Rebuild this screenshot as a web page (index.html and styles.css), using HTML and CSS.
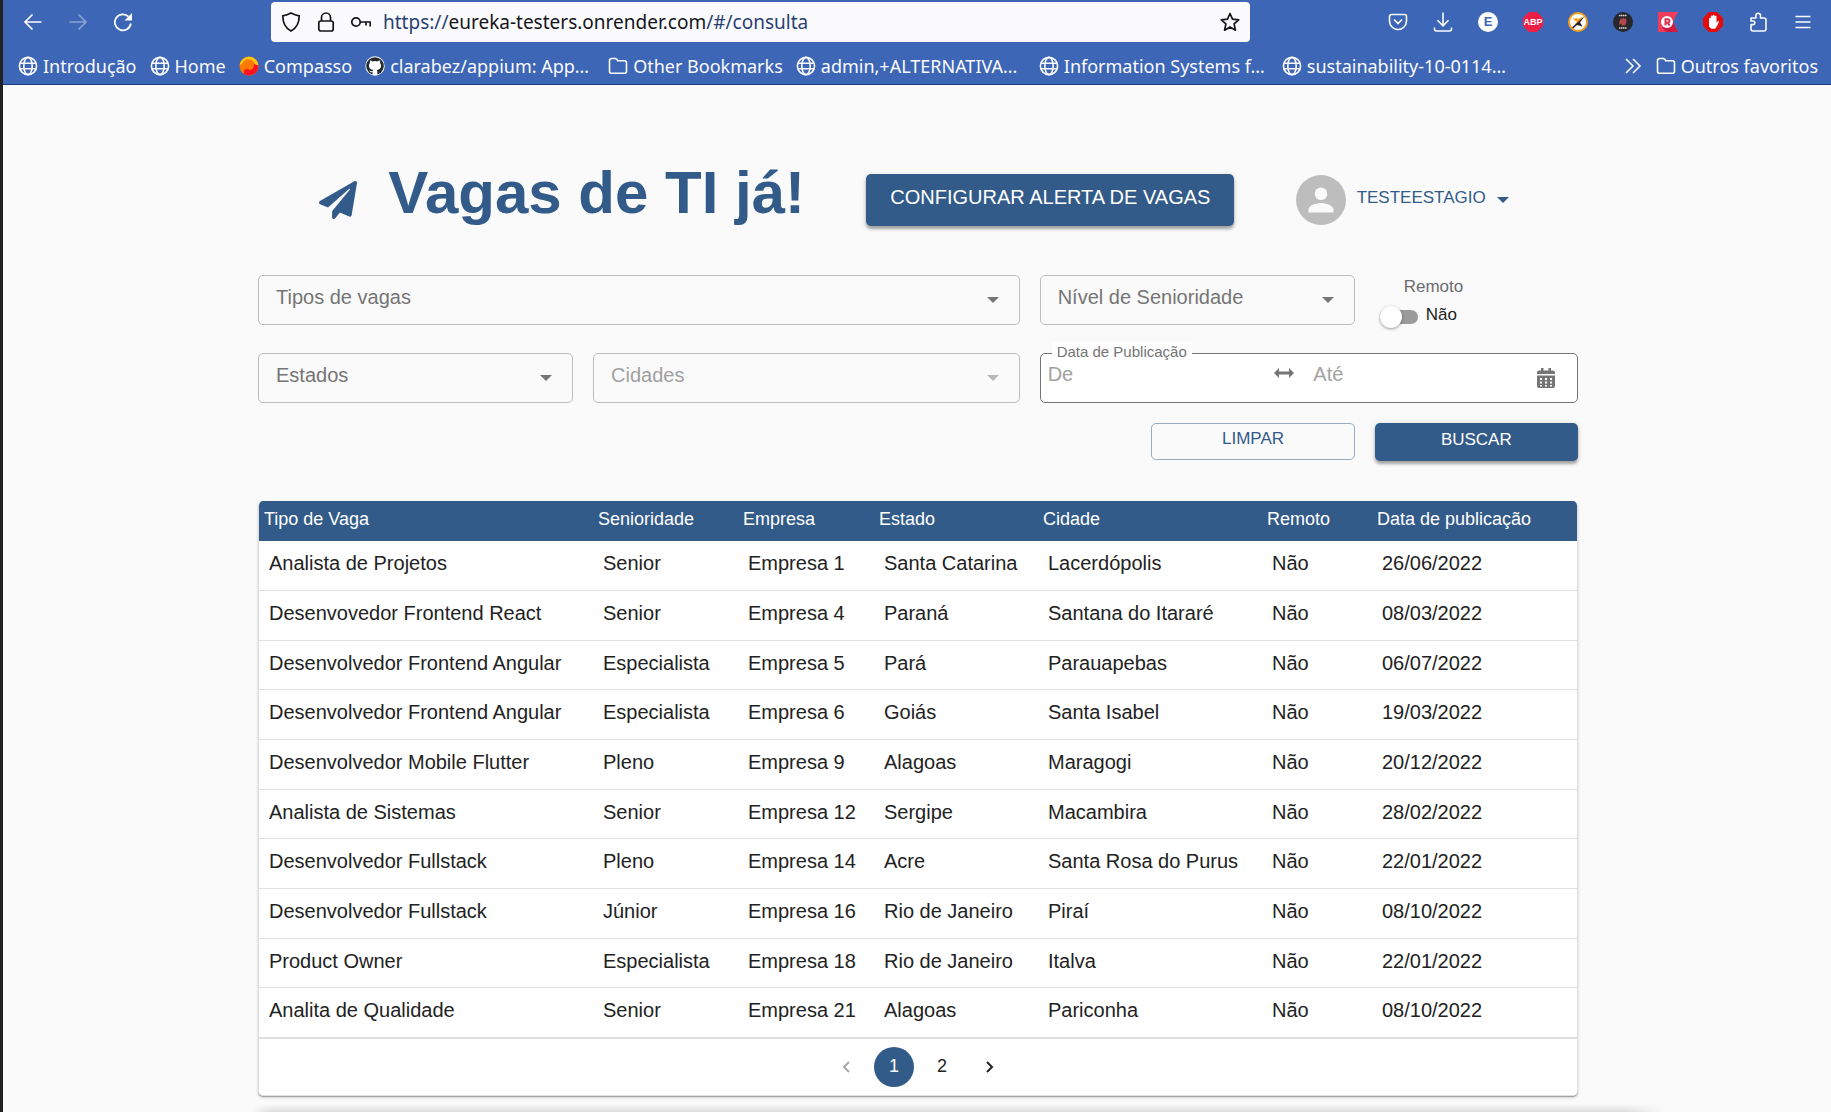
FILE: index.html
```html
<!DOCTYPE html>
<html lang="pt-BR">
<head>
<meta charset="utf-8">
<title>Vagas de TI já!</title>
<link rel="stylesheet" href="styles.css">
</head>
<body>
<svg class="defs" aria-hidden="true">
  <symbol id="globe" viewBox="0 0 20 20"><g fill="none" stroke="currentColor" stroke-width="1.6"><circle cx="10" cy="10" r="8.6"/><ellipse cx="10" cy="10" rx="4.2" ry="8.6"/><path d="M2 7.2h16M2 12.8h16"/></g></symbol>
  <symbol id="folder" viewBox="0 0 20 20"><path d="M1.5 4.5a2 2 0 0 1 2-2h3.6c.7 0 1.2.3 1.6.8l1 1.4h6.8a2 2 0 0 1 2 2v8.6a2 2 0 0 1-2 2h-13a2 2 0 0 1-2-2z" fill="none" stroke="currentColor" stroke-width="1.6"/></symbol>
  <symbol id="caret" viewBox="0 0 12 6"><path d="M0 0h12L6 6z" fill="currentColor"/></symbol>
</svg>

<header class="browser">
  <div class="toolbar">
    <div class="nav">
      <button type="button" aria-label="Voltar"><svg class="icon" viewBox="0 0 20 20"><path d="M18.500 10H2M9.500 2.500 2 10l7.500 7.500" fill="none" stroke="currentColor" stroke-width="1.700"/></svg></button>
      <button type="button" aria-label="Avançar" class="dim"><svg class="icon" viewBox="0 0 20 20"><path d="M1.500 10H18M10.500 2.500 18 10l-7.500 7.500" fill="none" stroke="currentColor" stroke-width="1.700"/></svg></button>
      <button type="button" aria-label="Recarregar"><svg class="icon" viewBox="0 0 20 20"><path d="M17.800 11.500A8 8 0 1 1 15.500 4.600" fill="none" stroke="currentColor" stroke-width="1.800"/><path d="M19 1v7.500h-7.500z" fill="currentColor"/></svg></button>
    </div>
    <div class="address">
      <svg class="icon" viewBox="0 0 20 20"><path d="M10 1c2.600 1.500 5.200 2.400 8.200 2.900 0 7-1.900 11.600-8.200 15.100C3.700 15.500 1.800 10.900 1.800 3.900 4.800 3.400 7.400 2.500 10 1z" fill="none" stroke="currentColor" stroke-width="1.700"/></svg>
      <svg class="icon" viewBox="0 0 20 20"><path d="M5.500 9V5.500a4.500 4.500 0 0 1 9 0V9" fill="none" stroke="currentColor" stroke-width="1.700"/><rect x="2.800" y="9" width="14.400" height="10" rx="2" fill="none" stroke="currentColor" stroke-width="1.700"/></svg>
      <svg class="icon" viewBox="0 0 20 20"><circle cx="5" cy="10" r="4.200" fill="none" stroke="currentColor" stroke-width="1.700"/><path d="M9 10h10.200v4.500M15 10v3.500" fill="none" stroke="currentColor" stroke-width="1.700"/></svg>
      <span class="url">https://<b>eureka-testers.onrender.com</b>/#/consulta</span>
      <button type="button" aria-label="Adicionar aos favoritos"><svg class="icon" viewBox="0 0 20 20"><path d="m10 1.500 2.500 5.600 6.200.7-4.600 4.100 1.300 6.300-5.400-3.200-5.400 3.200 1.300-6.300L1.300 7.800l6.200-.7z" fill="none" stroke="currentColor" stroke-width="1.700" stroke-linejoin="round"/></svg></button>
    </div>
    <div class="extensions">
      <button type="button" aria-label="Pocket"><svg class="icon" viewBox="0 0 20 20"><path d="M3.500 2.500h13a2 2 0 0 1 2 2V9a8.500 8.500 0 0 1-17 0V4.500a2 2 0 0 1 2-2zM6 7.500l4 4 4-4" fill="none" stroke="currentColor" stroke-width="1.600"/></svg></button>
      <button type="button" aria-label="Downloads"><svg class="icon" viewBox="0 0 20 20"><path d="M10 .5v13M4.500 8.300l5.500 5.500 5.500-5.500M1.500 15.500V17a2 2 0 0 0 2 2h13a2 2 0 0 0 2-2v-1.500" fill="none" stroke="currentColor" stroke-width="1.600"/></svg></button>
      <button type="button" class="badge badge-e">E</button>
      <button type="button" class="badge badge-abp">ABP</button>
      <button type="button" aria-label="Bloqueador"><svg class="icon" viewBox="0 0 20 20"><circle cx="10" cy="10" r="9" fill="#fff" stroke="#f5a01a" stroke-width="2"/><path d="M4.500 6.500h7.500l1.500-1.500 1.500 1-7 7.500-1-1.500 2-2z" fill="#f5a01a"/><path d="M16.800 3.800 4 15.500l1.200 1L9 13l5.500 1.500-2.500-4z" fill="#222"/></svg></button>
      <button type="button" aria-label="Twitch Adblock"><svg class="icon" viewBox="0 0 20 20"><circle cx="10" cy="10" r="10" fill="#26262b"/><path d="M6.500 9 8 6l1 1.500 1-2 1.500 1.500 1.500-1 .5 3-.5 3-1.500 1.500H9L8 11.500 6 13z" fill="#b2474c"/><path d="M6 3.500h8M6 16h8" stroke="#ddd" stroke-width="1.500" stroke-dasharray="1.500 .5"/></svg></button>
      <button type="button" aria-label="Recomendações"><svg class="icon" viewBox="0 0 20 20"><path d="M0 0h20l-5 10 5 10H0z" fill="#ee3c5a"/><path d="m4 15 10-10 1 5 5 10H8z" fill="#cf1b3e"/><circle cx="9" cy="10" r="6" fill="#fff"/><path d="M7.500 13.500V7.300h2.200a1.700 1.700 0 0 1 0 3.400H7.500m2.300 0 1.700 2.800" fill="none" stroke="#d9304f" stroke-width="2"/></svg></button>
      <button type="button" aria-label="AdBlock"><svg class="icon" viewBox="0 0 20 20"><path d="M6 0h8l6 6v8l-6 6H6l-6-6V6z" fill="#e50b0b"/><path d="M6 6.500a1 1 0 0 1 1.800 0V4.300a1 1 0 0 1 1.900 0V3.500a1 1 0 0 1 1.900 0v1a1 1 0 0 1 1.900 0V11l1.200-1.700c.8-.6 1.600 0 1.200.8L13.500 15l-1.500 1.800H8.200L6 14.500z" fill="#fff"/></svg></button>
      <button type="button" aria-label="Extensões"><svg class="icon" viewBox="0 0 20 20"><path d="M3 12.500V17a2 2 0 0 0 2 2h11a2 2 0 0 0 2-2V8a2 2 0 0 0-2-2h-3.500V3.500a2.300 2.300 0 0 0-4.600 0V6H3v3h2a1.800 1.800 0 0 1 0 3.600z" fill="none" stroke="currentColor" stroke-width="1.600" stroke-linejoin="round"/></svg></button>
      <button type="button" aria-label="Menu"><svg class="icon" viewBox="0 0 20 20"><path d="M2.500 4.500h15M2.500 10h15M2.500 15.500h15" stroke="currentColor" stroke-width="1.600"/></svg></button>
    </div>
  </div>
  <nav class="bookmarks">
    <a href="#"><svg class="icon"><use href="#globe"/></svg>Introdução</a>
    <a href="#"><svg class="icon"><use href="#globe"/></svg>Home</a>
    <a href="#"><svg class="icon" viewBox="0 0 20 20"><circle cx="10" cy="10" r="9.500" fill="#ff7a00"/><path d="M.6 9A9.500 9.500 0 0 1 19.400 9L16 12A6.500 6.500 0 0 0 3 8z" fill="#ffc814"/><circle cx="9" cy="10" r="6" fill="#ff7a00"/><path d="M19.400 9.500A9.500 9.500 0 0 1 5 18c-1-5 3-6 6-4 3 0 4-3 4-6z" fill="#ff1020"/></svg>Compasso</a>
    <a href="#" class="long"><svg class="icon" viewBox="0 0 20 20"><circle cx="10" cy="10" r="9.700" fill="#fff"/><circle cx="10" cy="10" r="8.800" fill="#24292e"/><path d="M7.600 19v-2.800c-2 .4-2.800-.6-3.400-1.800 1.200-.1 1.600 1.300 3.400.8.100-.6.300-1 .6-1.200-3-.4-4.300-1.700-4.300-4.400 0-1.100.4-2 1-2.700-.2-.8-.1-1.800.2-2.500 1 0 1.800.5 2.500 1a9 9 0 0 1 4.800 0c.7-.5 1.500-1 2.500-1 .3.700.4 1.700.2 2.500.6.700 1 1.600 1 2.700 0 2.700-1.300 4-4.300 4.400.4.400.6 1 .6 1.800V19z" fill="#fff"/></svg>clarabez/appium: App…</a>
    <a href="#"><svg class="icon"><use href="#folder"/></svg>Other Bookmarks</a>
    <a href="#" class="long"><svg class="icon"><use href="#globe"/></svg>admin,+ALTERNATIVA…</a>
    <a href="#" class="long"><svg class="icon"><use href="#globe"/></svg>Information Systems f…</a>
    <a href="#" class="long"><svg class="icon"><use href="#globe"/></svg>sustainability-10-0114…</a>
    <button type="button" class="more" aria-label="Mais favoritos"><svg class="icon" viewBox="0 0 20 20"><path d="m3 3 7 7-7 7M10 3l7 7-7 7" fill="none" stroke="currentColor" stroke-width="1.600"/></svg></button>
    <a href="#"><svg class="icon"><use href="#folder"/></svg>Outros favoritos</a>
  </nav>
</header>

<main class="page">
  <div class="container">
    <div class="masthead">
      <div class="brand">
        <svg class="plane" viewBox="0 0 512 512"><path d="M476 3.200 12.500 270.600c-18.100 10.400-15.800 35.600 2.200 43.200L121 358.400l287.300-253.200c5.500-4.900 13.300 2.600 8.600 8.300L176 407v80.500c0 23.600 28.500 32.900 42.500 15.800L282 426l124.600 52.200c14.200 6 30.400-2.900 33-18.200l72-432C515 7.800 493.300-6.800 476 3.200z" fill="currentColor"/></svg>
        <h1>Vagas de TI já!</h1>
      </div>
      <button type="button" class="btn btn-solid btn-large">CONFIGURAR ALERTA DE VAGAS</button>
      <button type="button" class="user">
        <svg class="avatar" viewBox="0 0 50 50"><circle cx="25" cy="25" r="25" fill="#bdbdbd"/><circle cx="25" cy="18.700" r="6.300" fill="#fafafa"/><path d="M12.500 37.500v-3.200c0-4.200 8.300-6.400 12.500-6.400s12.500 2.200 12.500 6.400v3.200z" fill="#fafafa"/></svg>
        <span>TESTEESTAGIO</span>
        <svg class="caret"><use href="#caret"/></svg>
      </button>
    </div>

    <form class="filters">
      <div class="filter-row">
        <div class="field w7"><select aria-label="Tipos de vagas"><option>Tipos de vagas</option></select><svg class="caret"><use href="#caret"/></svg></div>
        <div class="field w3"><select aria-label="Nível de Senioridade"><option>Nível de Senioridade</option></select><svg class="caret"><use href="#caret"/></svg></div>
        <div class="remote">
          <label for="remoto">Remoto</label>
          <div class="switch"><input type="checkbox" id="remoto"><span>Não</span></div>
        </div>
      </div>
      <div class="filter-row">
        <div class="field w3"><select aria-label="Estados"><option>Estados</option></select><svg class="caret"><use href="#caret"/></svg></div>
        <div class="field w4"><select aria-label="Cidades" disabled><option>Cidades</option></select><svg class="caret"><use href="#caret"/></svg></div>
        <div class="dates">
          <label for="de">Data de Publicação</label>
          <input type="text" id="de" placeholder="De">
          <svg class="range" viewBox="0 0 20 10"><path d="M0 5 5 0v3.600h10V0l5 5-5 5V6.400H5V10z" fill="currentColor"/></svg>
          <input type="text" aria-label="Até" placeholder="Até">
          <svg class="calendar" viewBox="0 0 18 20"><path fill="currentColor" fill-rule="evenodd" d="M0 7.500h18V18a2 2 0 0 1-2 2H2a2 2 0 0 1-2-2zM3 10v2h2v-2zm5 0v2h2v-2zm5 0v2h2v-2zM3 13.500v2h2v-2zm5 0v2h2v-2zm5 0v2h2v-2zM3 17v1.500h2V17zm5 0v1.500h2V17zm5 0v1.500h2V17zM18 6V4.500a2 2 0 0 0-2-2h-2V0h-2.500v2.500h-5V0H4v2.500H2a2 2 0 0 0-2 2V6z"/></svg>
        </div>
      </div>
      <div class="filter-row">
        <button type="reset" class="btn btn-outline">LIMPAR</button>
        <button type="button" class="btn btn-solid">BUSCAR</button>
      </div>
    </form>

    <section class="results">
      <table>
        <colgroup><col class="c-type"><col class="c-level"><col class="c-company"><col class="c-state"><col class="c-city"><col class="c-remote"><col></colgroup>
        <thead><tr><th>Tipo de Vaga</th><th>Senioridade</th><th>Empresa</th><th>Estado</th><th>Cidade</th><th>Remoto</th><th>Data de publicação</th></tr></thead>
        <tbody>
          <tr><td>Analista de Projetos</td><td>Senior</td><td>Empresa 1</td><td>Santa Catarina</td><td>Lacerdópolis</td><td>Não</td><td>26/06/2022</td></tr>
          <tr><td>Desenvovedor Frontend React</td><td>Senior</td><td>Empresa 4</td><td>Paraná</td><td>Santana do Itararé</td><td>Não</td><td>08/03/2022</td></tr>
          <tr><td>Desenvolvedor Frontend Angular</td><td>Especialista</td><td>Empresa 5</td><td>Pará</td><td>Parauapebas</td><td>Não</td><td>06/07/2022</td></tr>
          <tr><td>Desenvolvedor Frontend Angular</td><td>Especialista</td><td>Empresa 6</td><td>Goiás</td><td>Santa Isabel</td><td>Não</td><td>19/03/2022</td></tr>
          <tr><td>Desenvolvedor Mobile Flutter</td><td>Pleno</td><td>Empresa 9</td><td>Alagoas</td><td>Maragogi</td><td>Não</td><td>20/12/2022</td></tr>
          <tr><td>Analista de Sistemas</td><td>Senior</td><td>Empresa 12</td><td>Sergipe</td><td>Macambira</td><td>Não</td><td>28/02/2022</td></tr>
          <tr><td>Desenvolvedor Fullstack</td><td>Pleno</td><td>Empresa 14</td><td>Acre</td><td>Santa Rosa do Purus</td><td>Não</td><td>22/01/2022</td></tr>
          <tr><td>Desenvolvedor Fullstack</td><td>Júnior</td><td>Empresa 16</td><td>Rio de Janeiro</td><td>Piraí</td><td>Não</td><td>08/10/2022</td></tr>
          <tr><td>Product Owner</td><td>Especialista</td><td>Empresa 18</td><td>Rio de Janeiro</td><td>Italva</td><td>Não</td><td>22/01/2022</td></tr>
          <tr><td>Analita de Qualidade</td><td>Senior</td><td>Empresa 21</td><td>Alagoas</td><td>Pariconha</td><td>Não</td><td>08/10/2022</td></tr>
        </tbody>
      </table>
      <nav class="pagination" aria-label="Paginação">
        <button type="button" aria-label="Anterior" disabled><svg class="chevron" viewBox="0 0 8 12"><path d="M7 1 2 6l5 5" fill="none" stroke="currentColor" stroke-width="2"/></svg></button>
        <button type="button" class="current">1</button>
        <button type="button">2</button>
        <button type="button" aria-label="Próxima"><svg class="chevron" viewBox="0 0 8 12"><path d="m1 1 5 5-5 5" fill="none" stroke="currentColor" stroke-width="2"/></svg></button>
      </nav>
    </section>
  </div>
</main>
<footer class="shade"></footer>
</body>
</html>
```
FILE: styles.css
```css
* {
  box-sizing: border-box;
}

body {
  margin: 0;
  min-height: 100vh;
  display: flex;
  flex-direction: column;
  border-left: 3px solid #222;
  background: #fafafa;
  color: #222;
  font: 20px/24px "Liberation Sans", Arial, sans-serif;
}

button,
input,
select {
  font: inherit;
  color: inherit;
}

button {
  padding: 0;
  border: 0;
  background: none;
}

.defs {
  display: none;
}

.icon {
  display: block;
  flex: none;
  width: 20px;
  height: 20px;
}

/* Browser bars */
.browser {
  flex: none;
  background: #3d66b7;
  border-bottom: 1px solid #1d3a7c;
  color: #fbfbfe;
  font-family: "Noto Sans", "Open Sans", sans-serif;
  font-size: 18px;
}

.toolbar {
  display: flex;
  align-items: center;
  padding: 2px 18px 0 20px;
}

.nav {
  display: flex;
  gap: 25px;
  width: 248px;
}

.dim {
  opacity: 0.4;
}

.address {
  flex: 1;
  display: flex;
  align-items: center;
  gap: 15px;
  height: 40px;
  padding: 0 10px;
  border-radius: 4px;
  background: #fbfbfe;
  color: #15141a;
}

.url {
  flex: 1;
  margin-left: -3px;
  color: #2a3f73;
  font-size: 19px;
}

.url b {
  font-weight: 400;
  color: #15141a;
}

.extensions {
  display: flex;
  gap: 25px;
  padding-left: 138px;
}

.badge {
  width: 20px;
  height: 20px;
  font: bold 13px/20px "Liberation Sans", Arial, sans-serif;
}

.badge-e {
  border-radius: 50%;
  background: #fff;
  color: #3d66b7;
}

.badge-abp {
  background: #ed1e45;
  clip-path: polygon(30% 0, 70% 0, 100% 30%, 100% 70%, 70% 100%, 30% 100%, 0 70%, 0 30%);
  font-size: 9px;
}

.bookmarks {
  display: flex;
  align-items: center;
  gap: 13px;
  height: 42px;
  padding: 6px 13px 0 15px;
  white-space: nowrap;
}

.bookmarks a {
  display: flex;
  align-items: center;
  gap: 5px;
  color: inherit;
  text-decoration: none;
}

.bookmarks .long {
  width: 230px;
}

.more {
  margin-left: auto;
}

/* Page */
.page {
  flex: 1;
  padding: 80px 20px 0 22px;
}

.container {
  max-width: 1320px;
  margin: 0 auto;
}

.masthead {
  display: flex;
  justify-content: space-evenly;
  align-items: center;
  height: 70px;
  color: #325b89;
}

.brand {
  display: flex;
  align-items: center;
  gap: 31px;
}

.plane {
  width: 38px;
  height: 38px;
}

h1 {
  margin: 0;
  padding-bottom: 14px;
  font-size: 60px;
  line-height: 64px;
}

.btn {
  height: 38px;
  padding-bottom: 5px;
  border-radius: 5px;
  font-size: 17px;
}

.btn-solid {
  background: #325b89;
  color: #fff;
  box-shadow: 0 3px 3px rgba(0, 0, 0, 0.3), 0 1px 6px rgba(0, 0, 0, 0.12);
}

.btn-outline {
  height: 37px;
  border: 1px solid #98adc4;
  color: #325b89;
}

.btn-large {
  height: 52px;
  padding: 0 24px 6px;
  font-size: 20px;
}

.user {
  display: flex;
  align-items: center;
  gap: 11px;
  padding-right: 8px;
  font-size: 17px;
}

.user span {
  padding-bottom: 4px;
}

.avatar {
  width: 50px;
  height: 50px;
}

.caret {
  flex: none;
  width: 12px;
  height: 6px;
}

.filters {
  display: grid;
  gap: 20px;
  padding-top: 40px;
}

.filter-row {
  display: grid;
  grid-template-columns: repeat(12, 1fr);
  gap: 20px;
}

.field {
  position: relative;
  height: 50px;
  color: #757575;
}

.field select {
  appearance: none;
  width: 100%;
  height: 100%;
  padding: 0 40px 6px 17px;
  border: 1px solid #bcbcbc;
  border-radius: 5px;
  background: none;
  opacity: 1;
}

.field select:disabled {
  color: #a0a0a0;
}

.field select:disabled + .caret {
  color: #b8b8b8;
}

.field .caret {
  position: absolute;
  top: 22px;
  right: 21px;
  pointer-events: none;
}

.w7 {
  grid-column: span 7;
}

.w4 {
  grid-column: span 4;
}

.w3 {
  grid-column: span 3;
}

.remote {
  grid-column: span 2;
  height: 58px;
  padding-left: 5px;
  font-size: 17px;
}

.remote label {
  display: block;
  padding-left: 24px;
  color: #6c6c6c;
}

.switch {
  display: flex;
  align-items: center;
  gap: 8px;
  padding-top: 4px;
}

.switch input {
  appearance: none;
  display: flex;
  align-items: center;
  width: 38px;
  height: 14px;
  margin: 4px 0 0;
  border-radius: 7px;
  background: #9a9a9a;
}

.switch input::before {
  content: "";
  width: 22px;
  height: 22px;
  border-radius: 50%;
  background: #fff;
  box-shadow: 0 1px 3px rgba(0, 0, 0, 0.4);
}

.dates {
  position: relative;
  grid-column: span 5;
  display: flex;
  align-items: center;
  height: 50px;
  padding: 0 22px 0 7px;
  border: 1px solid #757575;
  border-radius: 5px;
  background: #fff;
  color: #757575;
}

.dates label {
  position: absolute;
  top: -12px;
  left: 11px;
  padding: 0 5px;
  background: #fff;
  font-size: 15px;
  line-height: 20px;
}

.dates input {
  flex: 1;
  min-width: 0;
  padding: 0 0 8px;
  border: 0;
  background: none;
}

.dates input::placeholder {
  color: #a2a2a2;
}

.range {
  width: 20px;
  height: 10px;
  margin: 0 19px 10px 3px;
}

.calendar {
  width: 18px;
  height: 20px;
}

.filters .btn {
  grid-column: span 2;
}

.filters .btn-outline {
  grid-column: 9 / span 2;
}

/* Results */
.results {
  margin-top: 40px;
  border: 1px solid #e0e0e0;
  border-top: 0;
  border-radius: 5px;
  background: #fff;
  box-shadow: 0 1px 1px rgba(0, 0, 0, 0.3), 0 2px 3px rgba(0, 0, 0, 0.12);
  overflow: hidden;
}

table {
  width: 100%;
  border-collapse: separate;
  border-spacing: 0;
  text-align: left;
}

.c-type {
  width: 334px;
}

.c-level {
  width: 145px;
}

.c-company {
  width: 136px;
}

.c-state {
  width: 164px;
}

.c-city {
  width: 224px;
}

.c-remote {
  width: 110px;
}

th {
  height: 40px;
  padding: 0 5px 5px;
  background: #325b89;
  color: #fff;
  font-size: 18px;
  font-weight: 400;
}

td {
  height: 50px;
  padding: 0 10px 5px;
  border-bottom: 1px solid #e0e0e0;
}

tr:nth-child(3n) td {
  height: 49px;
}

.pagination {
  display: flex;
  justify-content: center;
  gap: 8px;
  padding: 8px;
  border-top: 1px solid #e0e0e0;
  font-size: 18px;
}

.pagination button {
  display: flex;
  align-items: center;
  justify-content: center;
  width: 40px;
  height: 40px;
  padding-bottom: 3px;
  border-radius: 50%;
}

.pagination button:disabled {
  color: #a8a8a8;
}

.pagination .current {
  background: #325b89;
  color: #fff;
}

.chevron {
  width: 8px;
  height: 12px;
  margin-top: 3px;
}

.shade {
  height: 8px;
  margin: 0 165px 0 248px;
  background: linear-gradient(rgba(0, 0, 0, 0), rgba(0, 0, 0, 0.11));
  mask-image: linear-gradient(90deg, transparent, #000 20px, #000 calc(100% - 40px), transparent);
}
```
